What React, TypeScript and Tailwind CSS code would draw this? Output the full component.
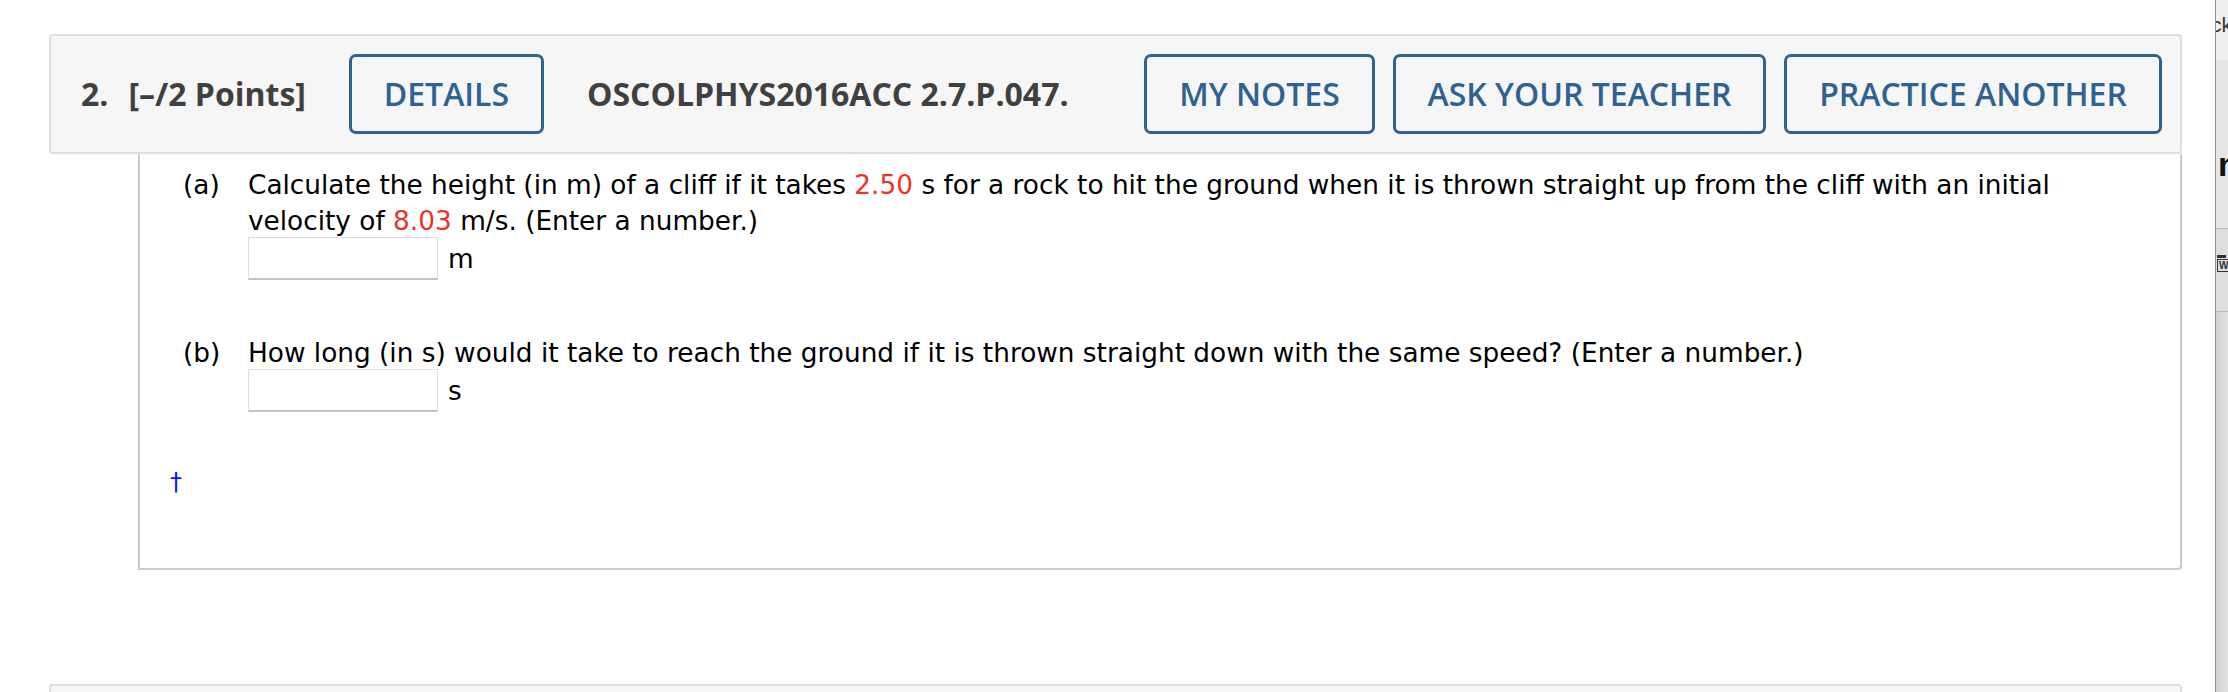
import React from "react";

function Btn({ w, children }: { w: string; children: React.ReactNode }) {
  return (
    <div
      className={`${w} h-[80px] shrink-0 flex items-center justify-center rounded-[7px] border-[3px] border-[#2d6292] text-[#2d6292] font-semibold`}
    >
      {children}
    </div>
  );
}

function Answer({ unit }: { unit: string }) {
  return (
    <div className="flex items-center mt-[-2px]">
      <div className="w-[190px] h-[43px] bg-white border border-[#dedede] border-b-2 border-b-[#c4c4c4]" />
      <span className="ml-[10px]">{unit}</span>
    </div>
  );
}

export default function App() {
  return (
    <div className="flex w-[2228px] h-[692px] overflow-hidden bg-white">
      <div className="flex-1 flex flex-col pt-[34px] pl-[49px] pr-[33px]">
        {/* header bar */}
        <div className="flex items-center h-[120px] shrink-0 rounded-[4px] border-2 border-[#dedede] bg-[#f6f6f6] pl-[30px] pr-[18px] font-['Open_Sans',sans-serif] text-[32px] text-[#404040]">
          <span className="font-bold">2.</span>
          <span className="font-bold ml-[20px]">[–/2 Points]</span>
          <div className="ml-[43px]">
            <Btn w="w-[195px]">DETAILS</Btn>
          </div>
          <span className="font-bold ml-[43px]">OSCOLPHYS2016ACC 2.7.P.047.</span>
          <div className="ml-auto flex gap-[18px]">
            <Btn w="w-[231px]">MY NOTES</Btn>
            <Btn w="w-[373px]">ASK YOUR TEACHER</Btn>
            <Btn w="w-[378px]">PRACTICE ANOTHER</Btn>
          </div>
        </div>

        {/* question body */}
        <div className="ml-[89px] w-[2044px] h-[416px] shrink-0 border-x-2 border-b-2 border-[#cccccc] rounded-br-[4px] bg-white pl-[43px] pt-[13px] font-['DejaVu_Sans',sans-serif] text-[26.35px] leading-[36px] text-black">
          <div className="flex">
            <div className="w-[65px] shrink-0">(a)</div>
            <div>
              <div className="whitespace-nowrap">
                Calculate the height (in m) of a cliff if it takes{" "}
                <span className="text-[#e8352a]">2.50</span> s for a rock to hit the ground when it is
                thrown straight up from the cliff with an initial
                <br />
                velocity of <span className="text-[#e8352a]">8.03</span> m/s. (Enter a number.)
              </div>
              <Answer unit="m" />
            </div>
          </div>

          <div className="flex mt-[55px]">
            <div className="w-[65px] shrink-0">(b)</div>
            <div>
              <div className="whitespace-nowrap">
                How long (in s) would it take to reach the ground if it is thrown straight down with the
                same speed? (Enter a number.)
              </div>
              <Answer unit="s" />
            </div>
          </div>

          <div className="mt-[57px] ml-[-13px] text-[24px] leading-[26px] text-[#1010ff]">†</div>
        </div>

        {/* next question header (cut off) */}
        <div className="mt-[114px] h-[40px] shrink-0 rounded-t-[4px] border-2 border-[#dedede] bg-[#f6f6f6]" />
      </div>

      {/* neighbouring window edge */}
      <div className="w-[14px] h-full shrink-0 flex flex-col overflow-hidden border-l border-[#8e8e8e] bg-gradient-to-r from-[#d2d2d2] to-[#e2e2e2]">
        <div className="h-[60px] shrink-0 bg-[#efefef] overflow-hidden">
          <div className="ml-[-5px] mt-[12px] text-[21px] leading-[26px] text-[#333] font-['Liberation_Sans',sans-serif] whitespace-nowrap">
            ck
          </div>
        </div>
        <div className="h-[168px] shrink-0 bg-[#e6e6e6] overflow-hidden">
          <div className="ml-[2px] mt-[86px] text-[34px] leading-[36px] font-bold text-[#111] font-['Liberation_Sans',sans-serif] whitespace-nowrap">
            n
          </div>
        </div>
        <div className="h-[84px] shrink-0 border-y border-[#b8b8b8] bg-[#dedede] overflow-hidden">
          <div className="mt-[26px] ml-[1px] flex flex-col gap-[1px]">
            <div className="w-[9px] h-[3px] bg-[#333]" />
            <div className="w-[12px] h-[13px] border border-[#333] text-[10px] leading-[11px] font-bold text-[#333] font-['Liberation_Sans',sans-serif] pl-[1px]">
              W
            </div>
          </div>
        </div>
        <div className="flex-1" />
      </div>
    </div>
  );
}
